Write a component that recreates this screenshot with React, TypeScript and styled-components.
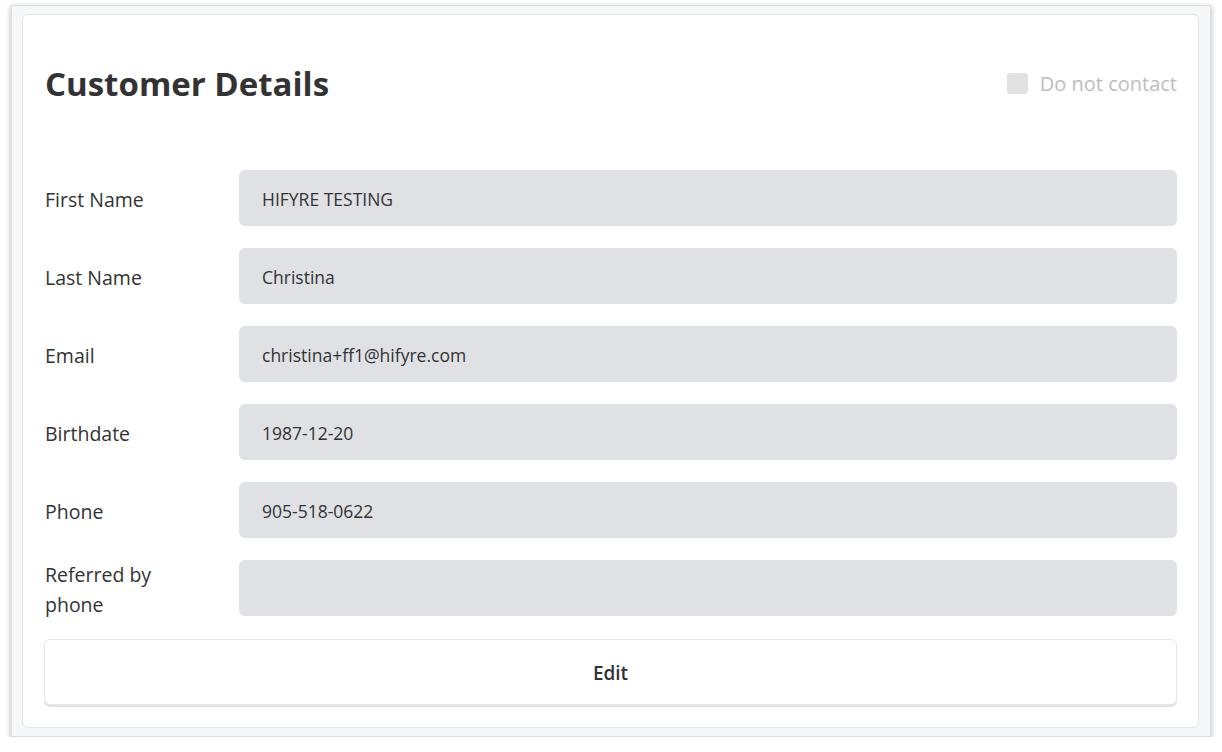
import styled, { createGlobalStyle } from "styled-components";

const GlobalStyle = createGlobalStyle`
  body {
    margin: 0;
    background: #ffffff;
    font-family: "Open Sans", Lato, sans-serif;
    color: #333333;
  }
`;

const Page = styled.div`
  padding: 5px 11px 0 11px;
`;

const Frame = styled.div`
  width: 1200px;
  height: 732px;
  box-sizing: border-box;
  background: #f6f7f9;
  border: 1px solid #dcdddf;
  box-shadow: 0 2px 6px rgba(0, 0, 0, 0.3);
  padding: 8px 11px 8px 10px;
`;

const Card = styled.section`
  height: 100%;
  box-sizing: border-box;
  background: #ffffff;
  border: 1px solid #e3e5e8;
  border-radius: 6px;
  padding: 22px 21px 21px 21px;
  display: flex;
  flex-direction: column;
`;

const Header = styled.div`
  height: 92px;
  display: flex;
  align-items: center;
  justify-content: space-between;
  margin-bottom: 41px;
  padding-left: 1px;
`;

const Title = styled.h1`
  margin: 0;
  font-size: 33px;
  font-weight: 700;
  color: #333333;
`;

const CheckLabel = styled.label`
  display: flex;
  align-items: center;
  gap: 12px;
  font-size: 20px;
  color: #bdbdbd;
`;

const Box = styled.span`
  width: 21px;
  height: 21px;
  border-radius: 3px;
  background: #e2e2e2;
`;

const Form = styled.div`
  display: flex;
  flex-direction: column;
  gap: 22px;
`;

const Row = styled.div`
  display: grid;
  grid-template-columns: 194px 1fr;
  grid-template-rows: 56px;
  align-items: center;
  padding-left: 1px;
`;

const Label = styled.span`
  font-size: 19.5px;
  line-height: 30px;
  padding-top: 3px;
  color: #333333;
  width: 130px;
`;

const Field = styled.div`
  height: 56px;
  border-radius: 6px;
  background: #dfe1e5;
  display: flex;
  align-items: center;
  padding: 1px 23px 0;
  box-sizing: border-box;
  font-size: 17.5px;
  color: #333333;
`;

const EditButton = styled.button`
  margin-top: 23px;
  height: 66px;
  width: 100%;
  padding-top: 3px;
  background: #ffffff;
  border: 1px solid #e3e5e8;
  border-radius: 6px;
  box-shadow: 0 2px 0 #dfe1e5;
  font-family: inherit;
  font-size: 19px;
  font-weight: 600;
  color: #333333;
  cursor: pointer;
`;

const fields = [
  { label: "First Name", value: "HIFYRE TESTING" },
  { label: "Last Name", value: "Christina" },
  { label: "Email", value: "christina+ff1@hifyre.com" },
  { label: "Birthdate", value: "1987-12-20" },
  { label: "Phone", value: "905-518-0622" },
  { label: "Referred by phone", value: "" },
];

export default function App() {
  return (
    <Page>
      <GlobalStyle />
      <Frame>
        <Card>
          <Header>
            <Title>Customer Details</Title>
            <CheckLabel>
              <Box />
              Do not contact
            </CheckLabel>
          </Header>
          <Form>
            {fields.map((f) => (
              <Row key={f.label}>
                <Label>{f.label}</Label>
                <Field>{f.value}</Field>
              </Row>
            ))}
          </Form>
          <EditButton>Edit</EditButton>
        </Card>
      </Frame>
    </Page>
  );
}
